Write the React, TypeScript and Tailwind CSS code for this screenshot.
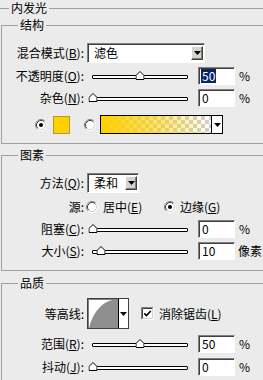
import React from "react";

const sunken =
  "bg-white border border-t-[#808080] border-l-[#808080] border-b-white border-r-white shadow-[inset_1px_1px_0_#404040]";

function U({ c }: { c: string }) {
  return <span className="underline underline-offset-[1px]">{c}</span>;
}

function Label({ children }: { children: React.ReactNode }) {
  return <div className="w-[82px] shrink-0 text-right whitespace-nowrap">{children}</div>;
}

function Tri() {
  return (
    <svg width="7" height="4" viewBox="0 0 7 4">
      <path d="M0 0H7L3.5 4Z" fill="#000" />
    </svg>
  );
}

function DropBtn() {
  return (
    <div className="w-[12px] h-[14px] mr-[1px] bg-[#d6d3ce] border border-t-white border-l-white border-b-[#404040] border-r-[#404040] shadow-[inset_-1px_-1px_0_#808080] flex items-center justify-center">
      <Tri />
    </div>
  );
}

function Select({ w, text }: { w: string; text: string }) {
  return (
    <div className={`ml-[3px] h-[20px] ${w} ${sunken} flex items-center`}>
      <span className="pl-[6px] flex-1">{text}</span>
      <DropBtn />
    </div>
  );
}

function Slider({ pct }: { pct: number }) {
  return (
    <div className="ml-[3px] w-[106px] h-[18px] flex items-center pl-[5px] shrink-0">
      <div className="relative w-[96px] h-[4px] border border-black bg-white translate-y-[1px] rounded-[1px]">
        <svg
          className="absolute bottom-[-2px] -translate-x-1/2"
          style={{ left: `${pct}%` }}
          width="9"
          height="9"
          viewBox="0 0 9 9"
        >
          <polygon points="0.5,8.5 0.5,4.5 4.5,0.5 8.5,4.5 8.5,8.5" fill="#fff" stroke="#000" />
        </svg>
      </div>
    </div>
  );
}

function Field({ value, selected }: { value: string; selected?: boolean }) {
  return (
    <div className={`ml-[5px] w-[37px] h-[18px] shrink-0 ${sunken} flex items-center pl-[2px]`}>
      {selected ? (
        <span className="bg-[#0a246a] text-white px-[1px] leading-[14px]">{value}</span>
      ) : (
        <span className="pl-[1px]">{value}</span>
      )}
    </div>
  );
}

function Radio({ checked }: { checked?: boolean }) {
  return (
    <svg width="12" height="12" viewBox="0 0 12 12" className="shrink-0">
      <circle cx="6" cy="6" r="5" fill="#fff" />
      <path d="M2.11 9.89 A5.5 5.5 0 0 1 9.89 2.11" stroke="#808080" fill="none" />
      <path d="M2.82 9.18 A4.5 4.5 0 0 1 9.18 2.82" stroke="#404040" fill="none" />
      <path d="M9.89 2.11 A5.5 5.5 0 0 1 2.11 9.89" stroke="#ffffff" fill="none" />
      <path d="M9.18 2.82 A4.5 4.5 0 0 1 2.82 9.18" stroke="#d4d0c8" fill="none" />
      {checked && <circle cx="6" cy="6" r="2" fill="#000" />}
    </svg>
  );
}

function Checkbox() {
  return (
    <svg width="13" height="13" viewBox="0 0 13 13" className="shrink-0">
      <rect x="0" y="0" width="13" height="13" fill="#fff" />
      <path d="M0.5 12.5V0.5H12.5" stroke="#808080" fill="none" />
      <path d="M1.5 11.5V1.5H11.5" stroke="#404040" fill="none" />
      <path d="M12.5 0.5V12.5H0.5" stroke="#ffffff" fill="none" />
      <path d="M11.5 1.5V11.5H1.5" stroke="#d4d0c8" fill="none" />
      <path d="M3.3 6.3L5.4 8.5L9.8 4" stroke="#000" strokeWidth="1.7" fill="none" />
    </svg>
  );
}

function Group({
  title,
  className,
  children,
}: {
  title: string;
  className: string;
  children: React.ReactNode;
}) {
  return (
    <fieldset className={`border border-r-0 border-[#a0a0a0] min-w-0 ${className}`}>
      <legend className="ml-[16px] px-[2px] leading-[12px]">{title}</legend>
      {children}
    </fieldset>
  );
}

export default function App() {
  return (
    <div className="w-[263px] h-[380px] overflow-hidden bg-[#ebebeb] text-[12px] leading-[12px] text-black font-['Noto_Sans_CJK_SC','Noto_Sans',sans-serif] pt-[2px]">
      <fieldset className="border-t border-[#a0a0a0] pl-[1px] min-w-0">
        <legend className="ml-[8px] px-[2px] leading-[12px]">内发光</legend>

        <Group title="结构" className="mt-[5px] pb-[9px]">
          <div className="mt-[12px] h-[20px] flex items-center">
            <Label>
              混合模式(<U c="B" />):
            </Label>
            <Select w="w-[118px]" text="滤色" />
          </div>
          <div className="mt-[3px] h-[19px] flex items-center">
            <Label>
              不透明度(<U c="O" />):
            </Label>
            <Slider pct={50} />
            <Field value="50" selected />
            <span className="ml-[4px]">%</span>
          </div>
          <div className="mt-[4px] h-[18px] flex items-center">
            <Label>
              杂色(<U c="N" />):
            </Label>
            <Slider pct={0} />
            <Field value="0" />
            <span className="ml-[4px]">%</span>
          </div>
          <div className="mt-[8px] h-[19px] flex items-center">
            <div className="ml-[33px]">
              <Radio checked />
            </div>
            <div className="ml-[6px] w-[17px] h-[18px] bg-[#fdd000] border border-[#b8982a]" />
            <div className="ml-[14px]">
              <Radio />
            </div>
            <div className="ml-[4px] w-[123px] h-[19px] border border-black flex">
              <div className="flex-1 bg-[image:repeating-conic-gradient(#cfcfcf_0%_25%,#ffffff_0%_50%)] bg-[length:8px_8px]">
                <div className="w-full h-full bg-[image:linear-gradient(to_right,#fdd000,rgba(253,208,0,0.55)_55%,rgba(253,208,0,0))]" />
              </div>
              <div className="w-[11px] border-l border-black bg-white flex items-center justify-center">
                <Tri />
              </div>
            </div>
          </div>
        </Group>

        <Group title="图素" className="mt-[5px] pb-[10px]">
          <div className="mt-[12px] h-[20px] flex items-center">
            <Label>
              方法(<U c="Q" />):
            </Label>
            <Select w="w-[52px]" text="柔和" />
          </div>
          <div className="mt-[6px] h-[16px] flex items-center">
            <Label>源:</Label>
            <div className="ml-[2px] w-[78px] flex items-center">
              <Radio />
              <span className="ml-[5px]">
                居中(<U c="E" />)
              </span>
            </div>
            <Radio checked />
            <span className="ml-[4px]">
              边缘(<U c="G" />)
            </span>
          </div>
          <div className="mt-[5px] h-[18px] flex items-center">
            <Label>
              阻塞(<U c="C" />):
            </Label>
            <Slider pct={0} />
            <Field value="0" />
            <span className="ml-[4px]">%</span>
          </div>
          <div className="mt-[4px] h-[18px] flex items-center">
            <Label>
              大小(<U c="S" />):
            </Label>
            <Slider pct={8.5} />
            <Field value="10" />
            <span className="ml-[3px]">像素</span>
          </div>
        </Group>

        <Group title="品质" className="mt-[6px] pb-[10px]">
          <div className="mt-[9px] h-[31px] flex items-center">
            <Label>等高线:</Label>
            <div className="ml-[3px] w-[42px] h-[31px] bg-white border border-[#404040] shadow-[inset_1px_1px_0_#808080] flex">
              <div className="flex-1 flex items-end pl-[1px] pt-[1px]">
                <svg width="29" height="28" viewBox="0 0 29 28">
                  <path d="M0 28 C 3 15, 11 3, 23 0 L29 0 L29 28 Z" fill="#8f8f8f" />
                </svg>
              </div>
              <div className="w-[11px] border-l border-black bg-white flex items-center justify-center">
                <Tri />
              </div>
            </div>
            <div className="ml-[12px]">
              <Checkbox />
            </div>
            <span className="ml-[5px]">
              消除锯齿(<U c="L" />)
            </span>
          </div>
          <div className="mt-[6px] h-[18px] flex items-center">
            <Label>
              范围(<U c="R" />):
            </Label>
            <Slider pct={50} />
            <Field value="50" />
            <span className="ml-[4px]">%</span>
          </div>
          <div className="mt-[5px] h-[18px] flex items-center">
            <Label>
              抖动(<U c="J" />):
            </Label>
            <Slider pct={0} />
            <Field value="0" />
            <span className="ml-[4px]">%</span>
          </div>
        </Group>
      </fieldset>
    </div>
  );
}
